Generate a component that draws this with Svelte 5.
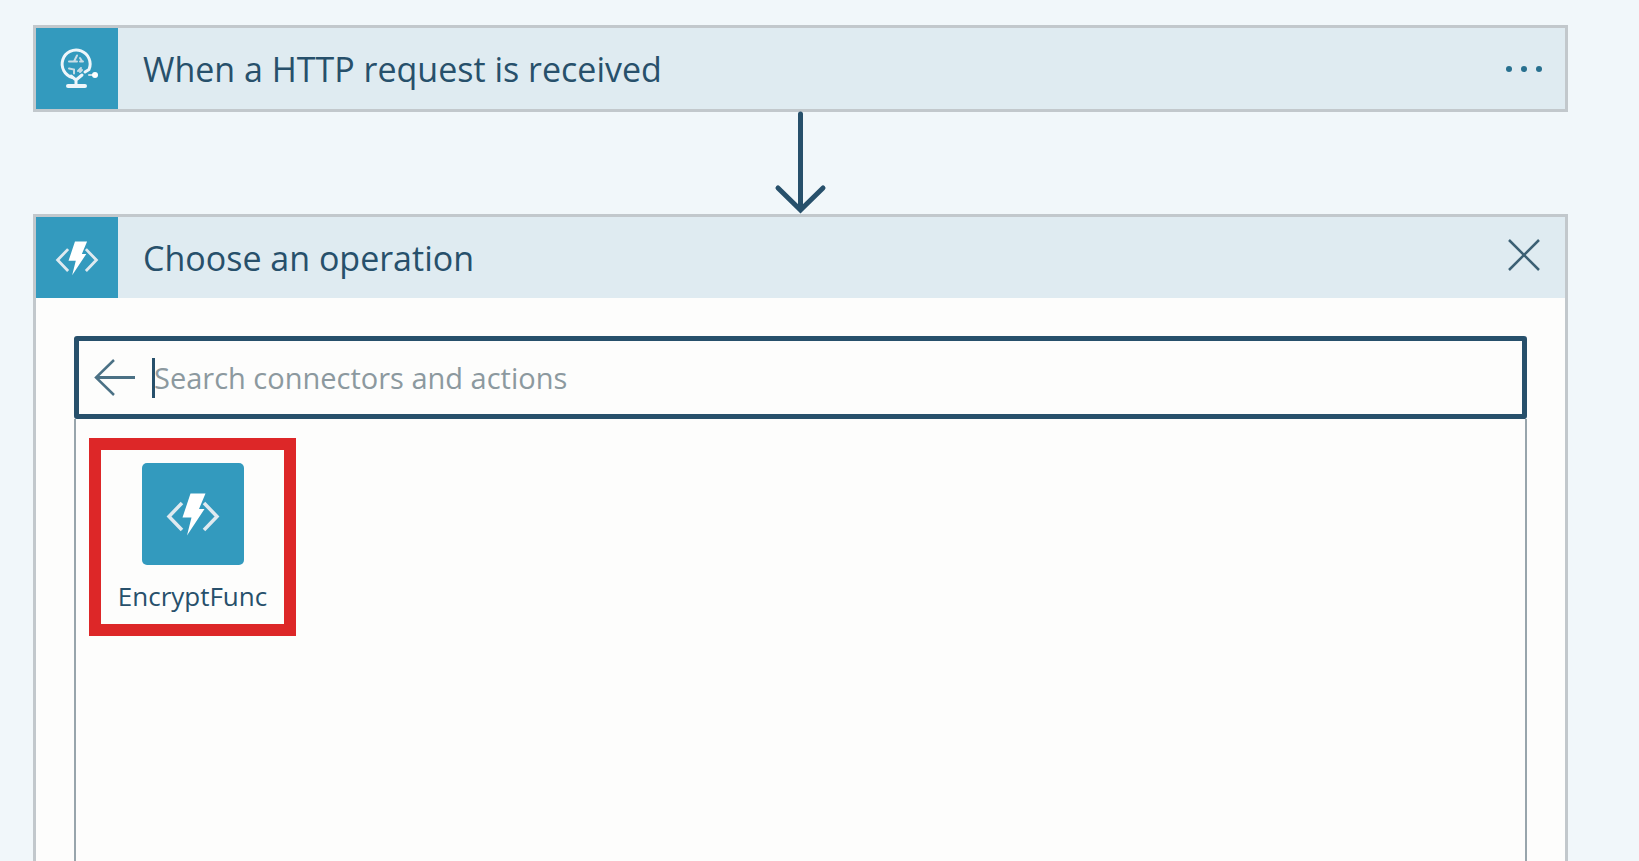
<script>
  let query = $state('');
  const connectors = [{ name: 'EncryptFunc' }];
</script>

{#snippet functionIcon()}
  <svg viewBox="0 0 52 42" fill="none" aria-hidden="true">
    <path d="M15 10 2 23.500 15 37M37 10 50 23.500 37 37" stroke="#dfeaf0" stroke-width="3.500" />
    <path d="M23.500 0.500H38.500L32 16H37.500L20 42.500 24.500 24.500H15.500Z" fill="#fff" />
  </svg>
{/snippet}

<main>
  <section class="card trigger">
    <header>
      <span class="badge globe">
        <svg viewBox="0 0 44 44" fill="none" stroke="#eef6fa" stroke-linecap="round" aria-hidden="true">
          <path d="M17.500 30.500A14 14 0 1 1 34 22.500L30 25" stroke-width="3" stroke-linejoin="round" />
          <path d="M14 14.500h5l3-6M19 14.500h3M25 14.500h3M25 11l2 3M14 21.500l5 1v4M26 21l-3 3M25 25l2-2" stroke-width="2" stroke="#c9dde6" />
          <path d="M16 29l5 4 6-5M21 33v5" stroke-width="3" />
          <path d="M13 39h17" stroke-width="4" />
          <path d="M34 28h5" stroke-width="2" stroke="#c9dde6" />
          <circle cx="40" cy="28" r="3" fill="#fff" stroke="none" />
        </svg>
      </span>
      <h2>When a HTTP request is received</h2>
      <button class="tool" aria-label="More options">
        <svg viewBox="0 0 40 32" aria-hidden="true">
          <g fill="#28708f"><circle cx="5" cy="16" r="3" /><circle cx="20" cy="16" r="3" /><circle cx="35" cy="16" r="3" /></g>
        </svg>
      </button>
    </header>
  </section>

  <svg class="connector" viewBox="0 0 52 102" fill="none" stroke="#27506b" stroke-width="5" stroke-linecap="round" aria-hidden="true">
    <path d="M25.500 2V97M3 76 25.500 98 48 76" />
  </svg>

  <section class="card operation">
    <header>
      <span class="badge">{@render functionIcon()}</span>
      <h2>Choose an operation</h2>
      <button class="tool" aria-label="Close">
        <svg viewBox="0 0 40 32" fill="none" stroke="#3c6074" stroke-width="2.500" aria-hidden="true">
          <path d="M5 -2 35 28M35 -2 5 28" />
        </svg>
      </button>
    </header>

    <div class="body">
      <div class="search">
        <button class="back" aria-label="Back">
          <svg viewBox="0 0 42 38" fill="none" stroke="#4b7185" aria-hidden="true">
            <path d="M20 1 2 18.500 20 36" stroke-width="2.500" />
            <path d="M2 18.500H41" stroke-width="3" />
          </svg>
        </button>
        <div class="field">
          <input type="text" bind:value={query} placeholder="Search connectors and actions" aria-label="Search connectors and actions" />
          <span class="caret"></span>
        </div>
      </div>
      <div class="results">
        {#each connectors as connector}
          <button class="tile">
            <span class="tile-icon">{@render functionIcon()}</span>
            <span>{connector.name}</span>
          </button>
        {/each}
      </div>
    </div>
  </section>
</main>

<style>
  :global(body) {
    background: #f1f7fa;
  }
  main {
    box-sizing: border-box;
    min-height: 100vh;
    padding: 25px 71px 0 33px;
    display: flex;
    flex-direction: column;
    font-family: "Open Sans", "Noto Sans", sans-serif;
    color: #27506b;
  }
  svg {
    display: block;
    overflow: visible;
  }
  button {
    padding: 0;
    border: 0;
    background: none;
    font: inherit;
    color: inherit;
    cursor: pointer;
  }
  .card {
    border: 3px solid #c2c8cc;
  }
  header {
    display: flex;
    align-items: center;
    height: 81px;
    padding-right: 21px;
    background: #dfebf1;
  }
  .badge {
    display: grid;
    place-items: center;
    flex: none;
    width: 82px;
    height: 81px;
    background: #339abe;
  }
  .badge svg {
    width: 42px;
    height: 36px;
  }
  .badge.globe svg {
    width: 44px;
    height: 44px;
  }
  h2 {
    flex: 1;
    margin: 0 0 0 25px;
    font-size: 34px;
    line-height: 48px;
    font-weight: 400;
  }
  .tool svg {
    width: 40px;
    height: 32px;
  }
  .connector {
    align-self: center;
    flex: none;
    width: 52px;
    height: 102px;
  }
  .operation {
    flex: 1;
    display: flex;
    flex-direction: column;
    border-bottom: 0;
    background: #fdfdfc;
  }
  .body {
    flex: 1;
    display: flex;
    flex-direction: column;
    padding: 38px 38px 0;
  }
  .search {
    display: flex;
    align-items: center;
    gap: 18px;
    height: 73px;
    padding: 0 15px;
    border: 5px solid #27506b;
    border-radius: 3px;
  }
  .back svg {
    width: 42px;
    height: 38px;
  }
  .field {
    position: relative;
    flex: 1;
  }
  input {
    box-sizing: border-box;
    width: 100%;
    padding: 0;
    border: 0;
    outline: 0;
    background: none;
    font: inherit;
    font-size: 29px;
    line-height: 40px;
    color: #27506b;
  }
  input::placeholder {
    color: #8c999f;
    opacity: 1;
  }
  .caret {
    position: absolute;
    left: -2px;
    top: 0;
    width: 3px;
    height: 40px;
    background: #27506b;
  }
  .results {
    flex: 1;
    padding: 19px 13px;
    border: 2px solid #98a5ac;
    border-width: 0 2px;
  }
  .tile {
    display: flex;
    flex-direction: column;
    align-items: center;
    gap: 13px;
    min-width: 207px;
    padding: 13px 14px 10px;
    border: 12px solid #dd2728;
    font-size: 26px;
    line-height: 36px;
  }
  .tile-icon {
    display: grid;
    place-items: center;
    width: 102px;
    height: 102px;
    border-radius: 5px;
    background: #339abe;
  }
  .tile-icon svg {
    width: 52px;
    height: 42px;
  }
</style>
